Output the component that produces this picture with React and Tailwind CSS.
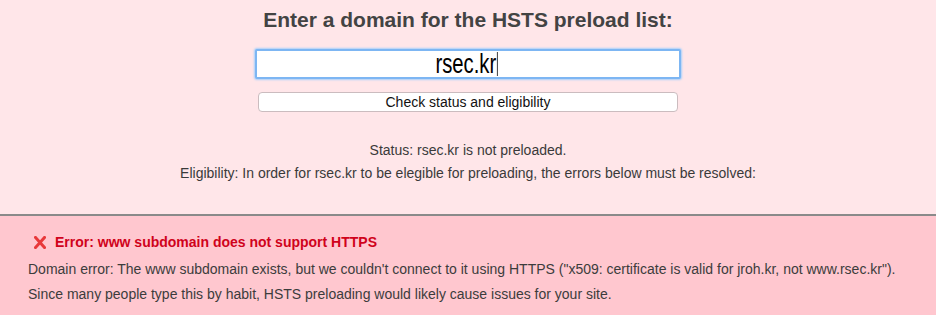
export default function App() {
    return (
        <div className="w-[936px] h-[315px] flex flex-col overflow-hidden font-['Liberation_Sans',Arial,sans-serif]">
            <div className="h-[214px] bg-[#ffe6e9] flex flex-col items-center">
                <h1 className="mt-[7px] text-[21px] leading-[25px] font-bold text-[#434343]">
                    Enter a domain for the HSTS preload list:
                </h1>
                <div className="mt-[17px] w-[426px] h-[30px] bg-white border-2 border-[#7db6f3] rounded-[2px] shadow-[0_0_2px_1px_#a9d0fb] flex items-center justify-center">
                    <span className="inline-flex items-center scale-x-[0.75] translate-x-[-1px]">
                        <span className="text-[27px] leading-[28px] text-black">rsec.kr</span>
                        <span className="w-[1.4px] h-[24px] bg-black ml-px"></span>
                    </span>
                </div>
                <button className="mt-[13px] w-[420px] h-[20px] bg-white border border-[#cbbcbf] rounded-[4px] text-[14px] leading-[18px] text-[#111]">
                    Check status and eligibility
                </button>
                <div className="mt-[27px] text-center text-[14px] leading-[23px] text-[#3a3a3a]">
                    <p>Status: rsec.kr is not preloaded.</p>
                    <p>Eligibility: In order for rsec.kr to be elegible for preloading, the errors below must be resolved:</p>
                </div>
            </div>
            <div className="h-[2px] bg-[#8a8a8a]"></div>
            <div className="flex-1 bg-[#ffc7cf] pl-[28px] pt-[16px]">
                <div className="flex items-center gap-[9px] pl-[6px] h-[20px]">
                    <svg width="12" height="13" viewBox="0 0 12 13">
                        <path d="M1.5 1.5 L10.5 11.5 M10.5 1.5 L1.5 11.5" stroke="#e8383a" strokeWidth="3" strokeLinecap="square" />
                    </svg>
                    <span className="text-[14px] font-bold text-[#d0021b]">Error: www subdomain does not support HTTPS</span>
                </div>
                <div className="mt-[5px] text-[14px] leading-[25px] text-[#3c3c3c]">
                    <p>Domain error: The www subdomain exists, but we couldn't connect to it using HTTPS ("x509: certificate is valid for jroh.kr, not www.rsec.kr").</p>
                    <p>Since many people type this by habit, HSTS preloading would likely cause issues for your site.</p>
                </div>
            </div>
        </div>
    );
}
